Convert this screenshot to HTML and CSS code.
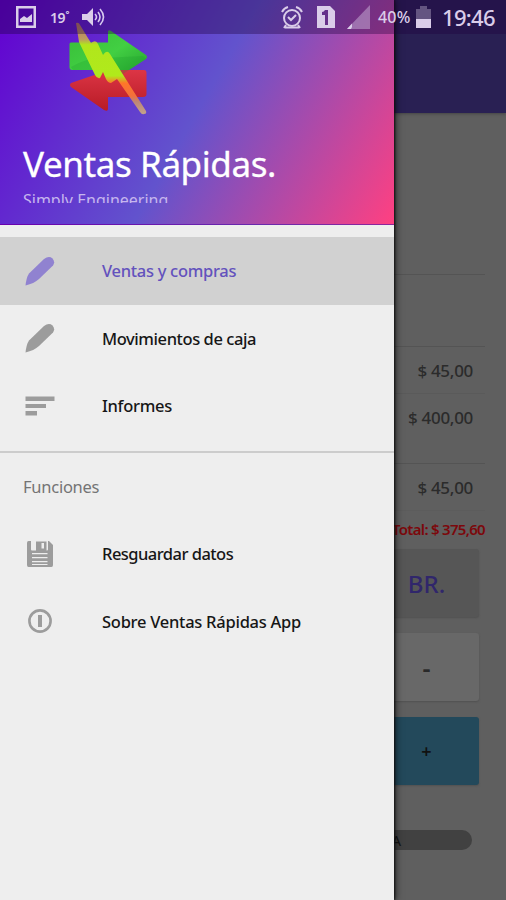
FILE: index.html
```html
<!DOCTYPE html>
<html lang="es">
<head>
<meta charset="utf-8">
<title>Ventas Rápidas</title>
<link rel="stylesheet" href="styles.css">
</head>
<body>
<div class="screen">
  <main class="page">
    <div class="appbar"></div>
    <div class="sales">
      <div class="row blank"></div>
      <div class="row gap"></div>
      <div class="row r1"><span>$ 45,00</span></div>
      <div class="row r2"><span>$ 400,00</span></div>
      <div class="row r3"><span>$ 45,00</span></div>
      <div class="total">Total: $ 375,60</div>
    </div>
    <div class="keys">
      <div class="key br">BR.</div>
      <div class="key minus">-</div>
      <div class="key plus">+</div>
    </div>
    <div class="pill">VENTA</div>
  </main>

  <aside class="drawer">
    <header class="head">
      <svg class="logo" viewBox="0 0 86 96" width="86" height="96">
        <defs>
          <linearGradient id="g" x1="0" y1="0" x2="1" y2="1"><stop offset="0" stop-color="#38bd38"/><stop offset=".5" stop-color="#42cf43"/><stop offset="1" stop-color="#209c2a"/></linearGradient>
          <linearGradient id="r" x1="0" y1="0" x2="0" y2="1"><stop offset="0" stop-color="#dc3545"/><stop offset="1" stop-color="#b81b26"/></linearGradient>
          <linearGradient id="b" x1="0" y1="0" x2="0" y2="1"><stop offset="0" stop-color="#b67864"/><stop offset=".18" stop-color="#bd9a60"/><stop offset=".24" stop-color="#b1e61c"/><stop offset=".58" stop-color="#b0ea1b"/><stop offset=".66" stop-color="#ff7629"/><stop offset=".8" stop-color="#f3703c"/><stop offset=".86" stop-color="#bd8575"/><stop offset="1" stop-color="#c3a28b"/></linearGradient>
        </defs>
        <path d="M3.500 22Q3.500 20.500 5 20.500H42V10Q42 7 45 9L80 33Q82 35 80 37L46 59Q43 60 43 57V48H6Q3.500 48 3.500 45Z" fill="url(#g)"/>
        <path d="M80.500 51Q80.500 48 78 48H43L5 61Q3 63 5 65L38 88Q42 90 42 87V75H77Q80.500 75 80.500 72Z" fill="url(#r)"/>
        <path d="M5 45Q20 36 36 36L77 34L80 37L46 59L43 48H7Z" fill="#16952b" opacity=".22"/>
        <path d="M10 1Q13 0 14 3L25 21Q30 17 32 22L37 33Q41 27 44 32L80 89Q81 92 78 92Q76 93 74 90L51 57L45 61Q42 61 40 57L37 50L34 56Q31 57 29 53L13 20Z" fill="url(#b)"/>
      </svg>
      <div class="title">Ventas Rápidas.</div>
      <div class="sub"><span>Simply Engineering</span></div>
    </header>
    <nav>
      <a class="item active">
        <svg viewBox="0 0 30 30"><path d="M.5 29.500Q1.500 21 4 17.500L19 3Q24-.5 27.500 2.500Q30.500 6 28 9.500L14 23Q9 27.500 .5 29.500Z"/></svg><span class="t1">Ventas y compras</span></a>
      <a class="item">
        <svg viewBox="0 0 30 30"><path d="M.5 29.500Q1.500 21 4 17.500L19 3Q24-.5 27.500 2.500Q30.500 6 28 9.500L14 23Q9 27.500 .5 29.500Z"/></svg><span class="t2">Movimientos de caja</span></a>
      <a class="item">
        <svg viewBox="0 0 30 30"><path d="M.5 5.500H29.500V10H.5ZM.5 13H21V17H.5ZM.5 20H12V24.500H.5Z"/></svg><span class="t3">Informes</span></a>
      <div class="section">Funciones</div>
      <a class="item">
        <svg viewBox="0 0 30 30"><path fill-rule="evenodd" d="M3.500 2H6V10.500Q6 11.500 7 11.500H22Q23 11.500 23 10.500V2H24L28 6V26Q28 28 26.500 28H3.500Q2 28 2 26V4Q2 2 3.500 2ZM7 14V15.300H22.500V14ZM7 18V19.300H22.500V18ZM7 22V23.300H22.500V22ZM7 25V26H22.500V25Z"/><path fill-rule="evenodd" d="M11 2.500H21.500V12H11ZM16.500 4V9.500H19V4Z"/></svg><span class="t4">Resguardar datos</span></a>
      <a class="item">
        <svg viewBox="0 0 30 30"><circle cx="15" cy="15" r="10.600" fill="none" stroke="#9c9c9c" stroke-width="2.600"/><path d="M13 9H17V21H13Z"/></svg><span class="t5">Sobre Ventas Rápidas App</span></a>
    </nav>
  </aside>

  <div class="status">
    <svg class="pic" viewBox="0 0 20 22" width="20" height="22"><path fill-rule="evenodd" d="M0 0H20V22H0ZM2.500 2.500V19.500H17.500V2.500Z"/><path d="M4 16V13L8 10L11 12L16 8V16Z"/></svg>
    <span class="temp">19˚</span>
    <svg class="snd" viewBox="0 0 24 18" width="24" height="18"><path d="M0 6H5L11 0V18L5 12H0Z"/><path d="M13 6Q16 9 13 12M16 4Q20 9 16 14M18 1Q25 9 18 17" fill="none" stroke="#d6c8ef" stroke-width="1.600"/></svg>
    <i class="spacer"></i>
    <svg class="alarm" viewBox="0 0 22 23" width="22" height="23"><g fill="none" stroke="#dacde9" stroke-width="2"><circle cx="11" cy="12" r="8"/><path d="M1 6Q3 2 7 1M15 1Q19 2 21 6M7 11L10 14L15 9M5 19L3 22M17 19L19 22M4 21.500H18"/></g></svg>
    <svg class="sim" viewBox="0 0 18 22" width="18" height="22"><path fill-rule="evenodd" d="M0 0H13L18 5V22H0ZM5 6V9H8V19H11V4H8Q7 6 5 6Z"/></svg>
    <svg class="sig" viewBox="0 0 23 24" width="23" height="24"><path d="M0 24L23 0V24Z" opacity=".42"/><path d="M0 24L5 18.500V22L4 24Z"/></svg>
    <span class="pct">40%</span>
    <svg class="bat" viewBox="0 0 15 22" width="15" height="22"><path d="M4 0H11V3H15V22H0V3H4Z" opacity=".35"/><path d="M0 13H15V22H0Z"/></svg>
    <span class="clock">19:46</span>
  </div>
</div>
</body>
</html>
```
FILE: styles.css
```css
* { box-sizing: border-box; }
body { margin: 0; font-family: "Noto Sans", sans-serif; }
.screen { position: relative; width: 506px; height: 900px; overflow: hidden; background: #5f5f5f; }

.page { display: flex; flex-direction: column; height: 900px; padding-right: 21px; }
.appbar { height: 113px; margin-right: -21px; background: #292053; box-shadow: 0 1px 3px #444; flex: none; }
.sales { display: flex; flex-direction: column; color: #2b2b2b; font-weight: 500; font-size: 17px; letter-spacing: -.3px; text-align: right; }
.row { display: flex; justify-content: flex-end; align-items: center; padding-right: 12px; border-bottom: 1px solid #545454; }
.blank { height: 162px; }
.gap { height: 72px; }
.r1 { height: 47px; border-color: #5a5a5a; }
.r2 { height: 70px; padding-bottom: 22px; }
.r3 { height: 47px; border-color: #5c5c5c; }
.total { height: 38px; line-height: 36px; color: #7c080c; font-size: 15px; font-weight: 600; letter-spacing: -.7px; }
.keys { display: flex; flex-direction: column; gap: 16px; margin-right: 6px; }
.key { display: flex; align-items: center; justify-content: center; height: 68px; margin-left: 374px; border-radius: 3px; font-size: 18px; font-weight: 600; color: #292929; box-shadow: 0 1px 2px #505050; }
.br { background: #565656; color: #30266b; font-size: 24px; font-weight: 500; }
.minus { background: #686868; font-size: 25px; }
.plus { background: #23495b; color: #111; }
.pill { height: 20px; margin: 45px 13px 0 200px; padding-right: 71px; border-radius: 10px; background: #414141; color: #151515; font-size: 15px; line-height: 20px; text-align: right; }

.drawer { position: absolute; top: 0; left: 0; width: 394px; height: 900px; background: #eee; box-shadow: 1px 0 2px #111, 2px 0 7px rgba(0,0,0,.55); }
.head { height: 225px; padding: 22px 23px 0; background: linear-gradient(119.7deg, #6200d1 0%, #6253cd 50%, #ff4081 100%); border-bottom: 1px solid rgba(110,0,140,.5); }
.logo { display: block; margin-left: 43px; }
.title { height: 50px; margin-top: 21px; line-height: 50px; font-size: 35px; font-weight: 450; letter-spacing: -.4px; color: #fff; white-space: nowrap; -webkit-text-stroke: .3px #fff; }
.sub { height: 14px; overflow: hidden; font-size: 16px; line-height: 23px; color: #c6b6ee; }
nav { padding-top: 12px; }
.item { display: flex; align-items: center; height: 67.5px; padding-left: 25px; font-size: 16.5px; font-weight: 500; color: #161616; white-space: nowrap; }
.item svg { width: 30px; height: 30px; margin-right: 47px; fill: #9c9c9c; flex: none; }
.t1 { letter-spacing: -.29px; }
.t2 { letter-spacing: -.42px; }
.t3 { letter-spacing: -.3px; }
.t4 { letter-spacing: -.53px; }
.t5 { letter-spacing: -.26px; }
.active { background: #d1d1d1; color: #6352bd; }
.active svg { fill: #9082d0; }
.section { height: 80px; margin-top: 11px; padding: 22px 23px 0; border-top: 2px solid #ccc; font-size: 16.5px; letter-spacing: -.25px; line-height: 24px; color: #747474; margin-bottom: -10.5px; }

.status { position: absolute; top: 0; left: 0; display: flex; align-items: center; width: 506px; height: 34px; padding: 0 10px 0 16px; background: rgba(30,0,60,.36); color: #dacde9; }
.status::before { content: ""; position: absolute; z-index: -1; left: 396px; top: 0; width: 110px; height: 34px; background: #28004f; }
.status svg { fill: #dacde9; flex: none; }
.temp { width: 32px; margin-left: 14px; font-size: 14px; font-weight: 600; letter-spacing: -.4px; }
.spacer { flex: 1; }
.alarm { margin-right: 14px; }
.sim { margin-right: 12px; }
.sig { margin-right: 8px; }
.pct { width: 38px; font-size: 16px; font-weight: 500; letter-spacing: .2px; }
.bat { margin-right: 11px; }
.clock { width: 54px; font-size: 22px; font-weight: 500; letter-spacing: -.7px; }
```
